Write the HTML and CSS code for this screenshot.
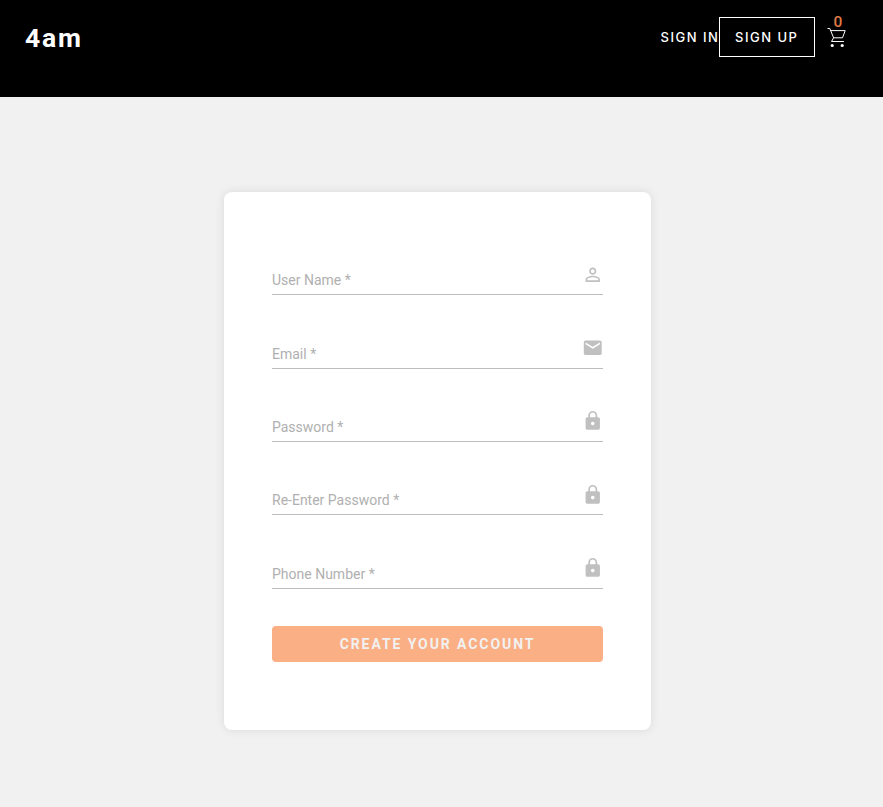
FILE: index.html
```html
<!DOCTYPE html>
<html lang="en">
<head>
<meta charset="utf-8">
<title>4am</title>
<link rel="stylesheet" href="styles.css">
</head>
<body>
<svg class="sprite" aria-hidden="true">
  <symbol id="lock" viewBox="0 0 24 24"><path d="M18 8h-1V6c0-2.760-2.240-5-5-5S7 3.240 7 6v2H6c-1.100 0-2 .9-2 2v10c0 1.100.9 2 2 2h12c1.100 0 2-.9 2-2V10c0-1.100-.9-2-2-2zm-6 9c-1.100 0-2-.9-2-2s.9-2 2-2 2 .9 2 2-.9 2-2 2zm3.100-9H8.900V6c0-1.710 1.390-3.100 3.100-3.100s3.100 1.390 3.100 3.100v2z"/></symbol>
</svg>
<header class="header">
  <a class="logo">4am</a>
  <nav class="nav">
    <a class="sign-in">SIGN IN</a>
    <a class="sign-up">SIGN UP</a>
    <a class="cart">
      <span class="count">0</span>
      <svg class="cart-icon" viewBox="0 0 20 21"><path class="cart-line" d="M.5 1.500h2.300l3.800 9.300h8.900l2.700-7.200H3.800M6.600 10.800l-2.100 3.700h12.400"/><circle cx="5.200" cy="18.500" r="1.550"/><circle cx="15.200" cy="18.500" r="1.550"/></svg>
    </a>
  </nav>
</header>
<main class="page">
  <form class="card">
    <div class="field"><label>User Name *</label><svg class="icon" viewBox="0 0 24 24"><path d="M12 5.900a2.100 2.100 0 1 1 0 4.200 2.100 2.100 0 0 1 0-4.200m0 9c2.970 0 6.100 1.460 6.100 2.100v1.100H5.900V17c0-.64 3.130-2.100 6.100-2.100M12 4C9.790 4 8 5.790 8 8s1.790 4 4 4 4-1.790 4-4-1.790-4-4-4zm0 9c-2.670 0-8 1.340-8 4v3h16v-3c0-2.660-5.330-4-8-4z"/></svg></div>
    <div class="field"><label>Email *</label><svg class="icon" viewBox="0 0 24 24"><path d="M20 4H4c-1.100 0-1.990.9-1.990 2L2 18c0 1.100.9 2 2 2h16c1.100 0 2-.9 2-2V6c0-1.100-.9-2-2-2zm0 4l-8 5-8-5V6l8 5 8-5v2z"/></svg></div>
    <div class="field"><label>Password *</label><svg class="icon"><use href="#lock"/></svg></div>
    <div class="field"><label>Re-Enter Password *</label><svg class="icon"><use href="#lock"/></svg></div>
    <div class="field"><label>Phone Number *</label><svg class="icon"><use href="#lock"/></svg></div>
    <button class="submit" type="button">CREATE YOUR ACCOUNT</button>
  </form>
</main>
</body>
</html>
```
FILE: styles.css
```css
* { box-sizing: border-box; }
body { margin: 0; min-height: 807px; background: #f1f1f1; font-family: Roboto, sans-serif; }
.sprite { display: none; }
.header { display: flex; justify-content: space-between; align-items: flex-start; height: 97px; padding: 17px 36px 0 25px; background: #000; color: #fff; font-family: Inter, sans-serif; }
.logo { font: 700 26.500px/42px Roboto, sans-serif; letter-spacing: 1.8px; }
.nav { display: flex; font-size: 13px; font-weight: 500; letter-spacing: 1.5px; line-height: 40px; }
.sign-in { width: 59px; padding-left: .5px; white-space: nowrap; }
.sign-up { width: 96px; height: 40px; border: 1px solid #fff; padding-left: 15px; line-height: 38px; white-space: nowrap; }
.cart { display: flex; flex-direction: column; align-items: center; width: 20px; margin-left: 12px; line-height: 11px; }
.count { margin-left: 2px; color: #e07b46; font-family: Roboto, sans-serif; font-size: 15.500px; letter-spacing: 0; }
.cart-icon { width: 20px; height: 21px; margin-top: -1.500px; fill: #fff; }
.cart-line { fill: none; stroke: #fff; stroke-width: 1; stroke-linejoin: round; }
.page { padding: 95px 0 0 224px; }
.card { width: 427px; height: 538px; padding: 69.200px 48px 0; border-radius: 8px; background: #fff; box-shadow: 0 0 10px rgba(0, 0, 0, .1); }
.field { display: flex; justify-content: space-between; height: 34px; margin-bottom: 39.350px; border-bottom: 1px solid #bdbdbd; color: #b0b0b0; font-size: 14px; letter-spacing: 0; }
.field label { padding-top: 11px; line-height: 16px; }
.icon { width: 21.500px; height: 21.500px; margin: 2.600px -.3px 0 0; fill: #c0c0c0; }
.submit { display: block; width: 331px; height: 36px; margin-top: -2px; padding: 0; border: 0; border-radius: 4px; background: #fbaf85; color: #f1f1f1; font: 700 14px Roboto, sans-serif; letter-spacing: 1.920px; }
```
